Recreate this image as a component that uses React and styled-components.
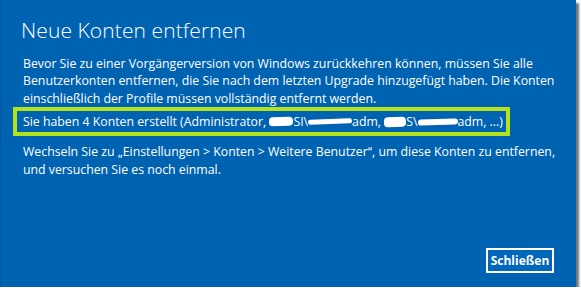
import React from 'react'
import styled, { createGlobalStyle } from 'styled-components'

const GlobalStyle = createGlobalStyle`
  html, body {
    margin: 0;
    padding: 0;
    background: #fff;
  }
`

const Dialog = styled.div`
  box-sizing: border-box;
  width: 576px;
  height: 287px;
  background: #0063b1;
  border-left: 1px solid #0456a0;
  box-shadow: 3px 3px 2px rgba(0, 0, 0, 0.55);
  padding: 19px 20px 0 19px;
  display: flex;
  flex-direction: column;
  color: #fff;
  font-family: 'Segoe UI', 'Open Sans', sans-serif;
`

const Title = styled.h1`
  margin: 0 0 0 1px;
  font-size: 21px;
  font-weight: 300;
  line-height: 22px;
  letter-spacing: 0.1px;
`

const Text = styled.p`
  margin: ${p => p.$top || 0}px 0 0 3px;
  font-size: 12.3px;
  line-height: 17.4px;
  white-space: nowrap;
`

const Highlight = styled.div`
  margin: 0 0 0 -7px;
  width: 497px;
  height: 29px;
  box-sizing: border-box;
  border: 4px solid #b5e31b;
  padding: 0 0 0 6px;
  display: flex;
  align-items: center;
  font-size: 12.3px;
  white-space: nowrap;
`

const Blot = styled.span`
  display: inline-block;
  vertical-align: middle;
  width: ${p => p.$w}px;
  height: ${p => p.$h || 7}px;
  background: #fff;
  border-radius: 4px;
  transform: rotate(-2deg);
`

const Footer = styled.div`
  margin-top: auto;
  padding-bottom: 14px;
  display: flex;
  justify-content: flex-end;
  padding-right: 2px;
`

const Button = styled.button`
  width: 68px;
  height: 25px;
  border: 2px solid #fff;
  background: #0067bb;
  color: #fff;
  font-family: 'Segoe UI', 'Open Sans', sans-serif;
  font-size: 12px;
  font-weight: 700;
  padding: 0;
`

export default function App() {
  return (
    <>
      <GlobalStyle />
      <Dialog>
        <Title>Neue Konten entfernen</Title>
        <Text $top={14}>
          Bevor Sie zu einer Vorgängerversion von Windows zurückkehren können, müssen Sie alle<br />
          Benutzerkonten entfernen, die Sie nach dem letzten Upgrade hinzugefügt haben. Die Konten<br />
          einschließlich der Profile müssen vollständig entfernt werden.
        </Text>
        <Highlight>
          Sie haben 4 Konten erstellt (Administrator,&nbsp;
          <Blot $w={24} $h={9} />SI\<Blot $w={44} $h={5} />adm,&nbsp;
          <Blot $w={22} $h={10} />S\<Blot $w={40} $h={6} />adm, ...)
        </Highlight>
        <Text $top={7}>
          Wechseln Sie zu „Einstellungen &gt; Konten &gt; Weitere Benutzer“, um diese Konten zu entfernen,<br />
          und versuchen Sie es noch einmal.
        </Text>
        <Footer>
          <Button>Schließen</Button>
        </Footer>
      </Dialog>
    </>
  )
}
